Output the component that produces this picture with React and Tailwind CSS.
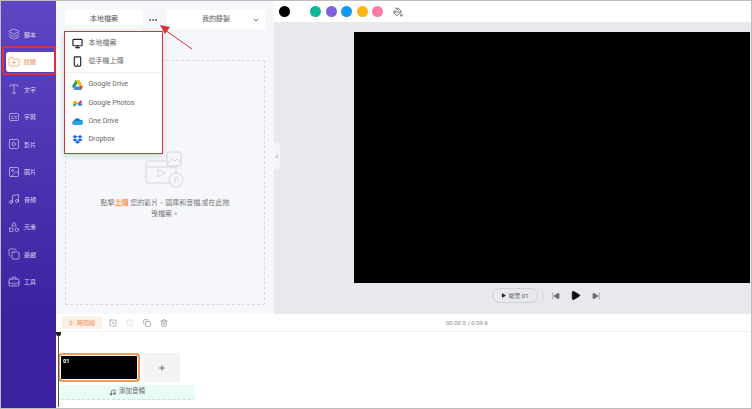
import React from 'react';
import {
  Layers, FolderPlus, Type, Captions, SquarePlay, Image, Music, Shapes, Copy, BriefcaseBusiness,
  ChevronDown, ChevronLeft, Ellipsis, Monitor, Smartphone, PaintBucket, Play, SkipBack, SkipForward,
  Plus, Trash2, Columns2, SquareDot, Scissors,
} from 'lucide-react';

const font = "font-['Roboto','Noto_Sans_CJK_TC',sans-serif]";

const navItems = [
  { label: '腳本', Icon: Layers },
  { label: '媒體', Icon: FolderPlus, active: true },
  { label: '文字', Icon: Type },
  { label: '字幕', Icon: Captions },
  { label: '影片', Icon: SquarePlay },
  { label: '圖片', Icon: Image },
  { label: '音頻', Icon: Music },
  { label: '元素', Icon: Shapes },
  { label: '遊戲', Icon: Copy },
  { label: '工具', Icon: BriefcaseBusiness },
];

const colors = ['bg-[#10b69a]', 'bg-[#7b62dc]', 'bg-[#1499f5]', 'bg-[#fbb612]', 'bg-[#fb7ba6]'];

const DriveIcon = () => (
  <svg width="11" height="10" viewBox="0 0 22 20">
    <path d="M7.500 0h7l7 12h-7z" fill="#fbbc04" />
    <path d="M7.500 0l3.500 6-7 12.500L0 12.500z" fill="#1ea362" />
    <path d="M7 13h14.500L18 20H3.500z" fill="#4285f4" />
    <path d="M14.500 12H21.500L18 20z" fill="#ea4335" />
  </svg>
);

const PhotosIcon = () => (
  <svg width="11" height="11" viewBox="0 0 22 22">
    <path d="M11 11V1a5 5 0 0 1 0 10z" fill="#ea4335" transform="rotate(45 11 11)" />
    <path d="M11 11h10a5 5 0 0 1-10 0z" fill="#4285f4" />
    <path d="M11 11v10a5 5 0 0 1 0-10z" fill="#34a853" transform="rotate(45 11 11)" />
    <path d="M11 11H1a5 5 0 0 1 10 0z" fill="#fbbc04" />
  </svg>
);

const CloudIcon = () => (
  <svg width="12" height="9" viewBox="0 0 24 16">
    <path d="M6 15a5 5 0 0 1-1-9.800A7 7 0 0 1 17.500 4 5.500 5.500 0 0 1 19 15z" fill="#0b72c6" />
    <path d="M5 15c-3 0-5-1.500-5-3.500S2 8 5 8c2-3 6-3 8-1 3-2 11-1 11 4 0 3-2 4-4 4z" fill="#2aa4e8" />
  </svg>
);

const DropboxIcon = () => (
  <svg width="11" height="10" viewBox="0 0 22 20" fill="#1565e8">
    <path d="M6 0l5 3.300L6 6.600 1 3.300zM16 0l5 3.300-5 3.300-5-3.300zM1 9.900l5-3.300 5 3.300-5 3.300zM21 9.900l-5-3.300-5 3.300 5 3.300zM6 14.300l5-3.300 5 3.300-5 3.400z" />
  </svg>
);

const MenuRow = ({ icon, label }) => (
  <div className="flex h-[18.300px] items-center gap-[5.500px] pl-[7px]">
    <span className="flex w-[11px] justify-center text-[#222]">{icon}</span>
    <span className="text-[7px] text-[#666]">{label}</span>
  </div>
);

const App = () => {
  return (
    <div className={`relative flex h-[409px] w-[752px] flex-col overflow-hidden border border-[#bdbdbd] bg-white ${font}`}>
      <div className="flex min-h-0 flex-1">
        {/* sidebar */}
        <div className="flex w-[55px] shrink-0 flex-col gap-[7.550px] bg-gradient-to-b from-[#5f45c4] to-[#3c22a0] pl-[5px] pr-[2px] pt-[23px]">
          {navItems.map(({ label, Icon, active }) => (
            <div
              key={label}
              className={`flex h-[20px] items-center gap-[4px] rounded-l-[3px] pl-[2px] ${active ? 'bg-white text-[#f08a4b]' : 'text-[#dcd6f4]'}`}
            >
              <Icon size={12} strokeWidth={1.300} />
              <span className="text-[6px]">{label}</span>
            </div>
          ))}
        </div>

        <div className="flex min-w-0 flex-1 flex-col">
          <div className="flex min-h-0 flex-1">
            {/* media panel */}
            <div className="flex w-[218px] shrink-0 flex-col bg-[#f6f7fb] pl-[9px] pr-[9px] pt-[9px]">
              <div className="flex h-[19px] items-center">
                <div className="flex h-full w-[78px] items-center justify-center bg-white text-[7px] text-[#555]">本地檔案</div>
                <div className="flex h-full w-[24px] items-center justify-center pr-[4px] text-[#333]">
                  <Ellipsis size={10} strokeWidth={2} />
                </div>
                <div className="relative flex h-full w-[98px] items-center justify-center bg-white text-[7px] text-[#555]">
                  我的錄製
                  <ChevronDown size={8} strokeWidth={2} className="absolute right-[5px] text-[#333]" />
                </div>
              </div>
              <div className="mb-[9px] mt-[31px] flex flex-1 flex-col items-center border border-dashed border-[#d9dbe2] pt-[90px]">
                <svg width="40" height="40" viewBox="0 0 40 40" fill="none" stroke="#d3d5da" strokeWidth="1">
                  <rect x="1" y="10" width="30" height="22" rx="3" />
                  <path d="M1 16h30" />
                  <rect x="22" y="1" width="14" height="14" rx="2" fill="#f6f7fb" />
                  <path d="M23 12l4-4 3 2 2-2 3 3" />
                  <path d="M13 18l7 4-7 4z" />
                  <circle cx="31" cy="29" r="7" fill="#f6f7fb" />
                  <path d="M30 32v-5l3-1v4" />
                </svg>
                <p className="mt-[7px] w-[130px] text-center text-[7px] leading-[10.500px] text-[#777]">
                  點擊<span className="bg-[#fde6d6] text-[#f0793a]">上傳</span> 您的影片、圖庫和音檔,或在此拖曳檔案。
                </p>
              </div>
            </div>
            {/* preview */}
            <div className="flex min-w-0 flex-1 flex-col">
              <div className="flex h-[21px] shrink-0 items-center bg-white pl-[5px]">
                <span className="h-[11px] w-[11px] rounded-full bg-black" />
                <div className="ml-[20px] flex gap-[4.500px]">
                  {colors.map((color) => (
                    <span key={color} className={`h-[11px] w-[11px] rounded-full ${color}`} />
                  ))}
                </div>
                <PaintBucket size={10} strokeWidth={1.500} className="ml-[10px] text-[#222]" />
              </div>
              <div className="relative flex flex-1 flex-col items-end bg-[#e8e9ec] pr-[1px] pt-[10px]">
                <div className="absolute left-0 top-[121px] flex h-[26px] w-[6px] items-center justify-center rounded-r-[3px] bg-[#f4f4f6] text-[#555]">
                  <ChevronLeft size={7} strokeWidth={2} />
                </div>
                <div className="h-[251px] w-[396px] bg-black" />
                <div className="mr-[150px] mt-[5px] flex h-[15px] items-center">
                  <div className="flex h-[15px] w-[46px] items-center justify-center gap-[2px] rounded-full border border-[#cfd0d4] text-[#555]">
                    <Play size={5} fill="#222" className="text-[#222]" />
                    <span className="text-[6px]">場景 01</span>
                  </div>
                  <div className="ml-[4px] h-[11px] w-px bg-[#d5d6da]" />
                  <SkipBack size={8} className="ml-[9px] text-[#666]" fill="#666" />
                  <Play size={11} className="ml-[10px] text-[#111]" fill="#111" />
                  <SkipForward size={8} className="ml-[11px] text-[#666]" fill="#666" />
                </div>
              </div>
            </div>
          </div>
        </div>
      </div>

      {/* timeline */}
      <div className="flex h-[94px] shrink-0">
        <div className="w-[55px] shrink-0 bg-[#3c22a0]" />
        <div className="relative min-w-0 flex-1 bg-white">
          <div className="flex h-[18px] items-center border-b border-[#f3f3f5] pl-[6px] text-[#555]">
            <div className="flex h-[13px] w-[40px] items-center justify-center gap-[2px] rounded-[3px] bg-[#fdf0e7] text-[#f08a4b]">
              <Scissors size={6} strokeWidth={1.500} />
              <span className="text-[6px]">時間線</span>
            </div>
            <SquareDot size={8} strokeWidth={1.300} className="ml-[7px]" />
            <Columns2 size={8} strokeWidth={1.300} className="ml-[9px] text-[#ccc]" />
            <Copy size={8} strokeWidth={1.300} className="ml-[9px]" />
            <Trash2 size={8} strokeWidth={1.300} className="ml-[9px]" />
            <span className="absolute left-[390px] text-[6px] text-[#888]">00:00.0 / 0:09.6</span>
          </div>
          {/* playhead */}
          <div className="absolute left-0 top-[18px] flex flex-col items-center">
            <div className="h-[4px] w-[5px] rounded-b-[2px] bg-[#222]" />
            <div className="h-[71px] w-px bg-[#555]" />
          </div>
          <div className="ml-[2px] mt-[21px] flex items-center">
            <div className="h-[29px] w-[82px] rounded-[4px] border-2 border-[#f09a5c] bg-black pl-[3px] text-[5.500px] font-bold leading-[13px] text-white shadow-[inset_0_0_0_1px_white]">
              01
            </div>
            <div className="ml-[4px] flex h-[29px] w-[36px] items-center justify-center bg-[#f3f3f4] text-[#222]">
              <Plus size={8} strokeWidth={2} />
            </div>
          </div>
          <div className="ml-[3px] mt-[3px] flex h-[15px] w-[136px] items-center justify-center gap-[3px] rounded-[2px] border-b border-dashed border-[#bfe8d6] bg-[#e8fbf4] text-[#333]">
            <Music size={7} strokeWidth={1.800} />
            <span className="text-[6.500px] text-[#666]">添加音頻</span>
          </div>
        </div>
      </div>

      {/* annotation: red box around media tab */}
      <div className="absolute left-[1px] top-[45px] h-[29px] w-[54px] rounded-[1px] border-2 border-[#d8303c]" />

      {/* popup menu */}
      <div className="absolute left-[63px] top-[30px] flex h-[123px] w-[99px] flex-col border-[1.500px] border-[#d8303c] bg-white pt-[2px] shadow-[0_2px_6px_rgba(0,0,0,0.15)]">
        <MenuRow icon={<Monitor size={11} strokeWidth={2.500} />} label="本地檔案" />
        <MenuRow icon={<Smartphone size={11} strokeWidth={2.500} />} label="從手機上傳" />
        <div className="mb-[3px] mt-[1px] h-px bg-[#eeeeee]" />
        <MenuRow icon={<DriveIcon />} label="Google Drive" />
        <MenuRow icon={<PhotosIcon />} label="Google Photos" />
        <MenuRow icon={<CloudIcon />} label="One Drive" />
        <MenuRow icon={<DropboxIcon />} label="Dropbox" />
      </div>

      {/* annotation: arrow */}
      <svg className="absolute left-[155px] top-[20px]" width="40" height="32" viewBox="0 0 40 32" fill="none">
        <path d="M36 28L9 9" stroke="#d8303c" strokeWidth="1" />
        <path d="M4 4l10 2-5 7z" fill="#d8303c" />
      </svg>
    </div>
  );
};

export default App;
